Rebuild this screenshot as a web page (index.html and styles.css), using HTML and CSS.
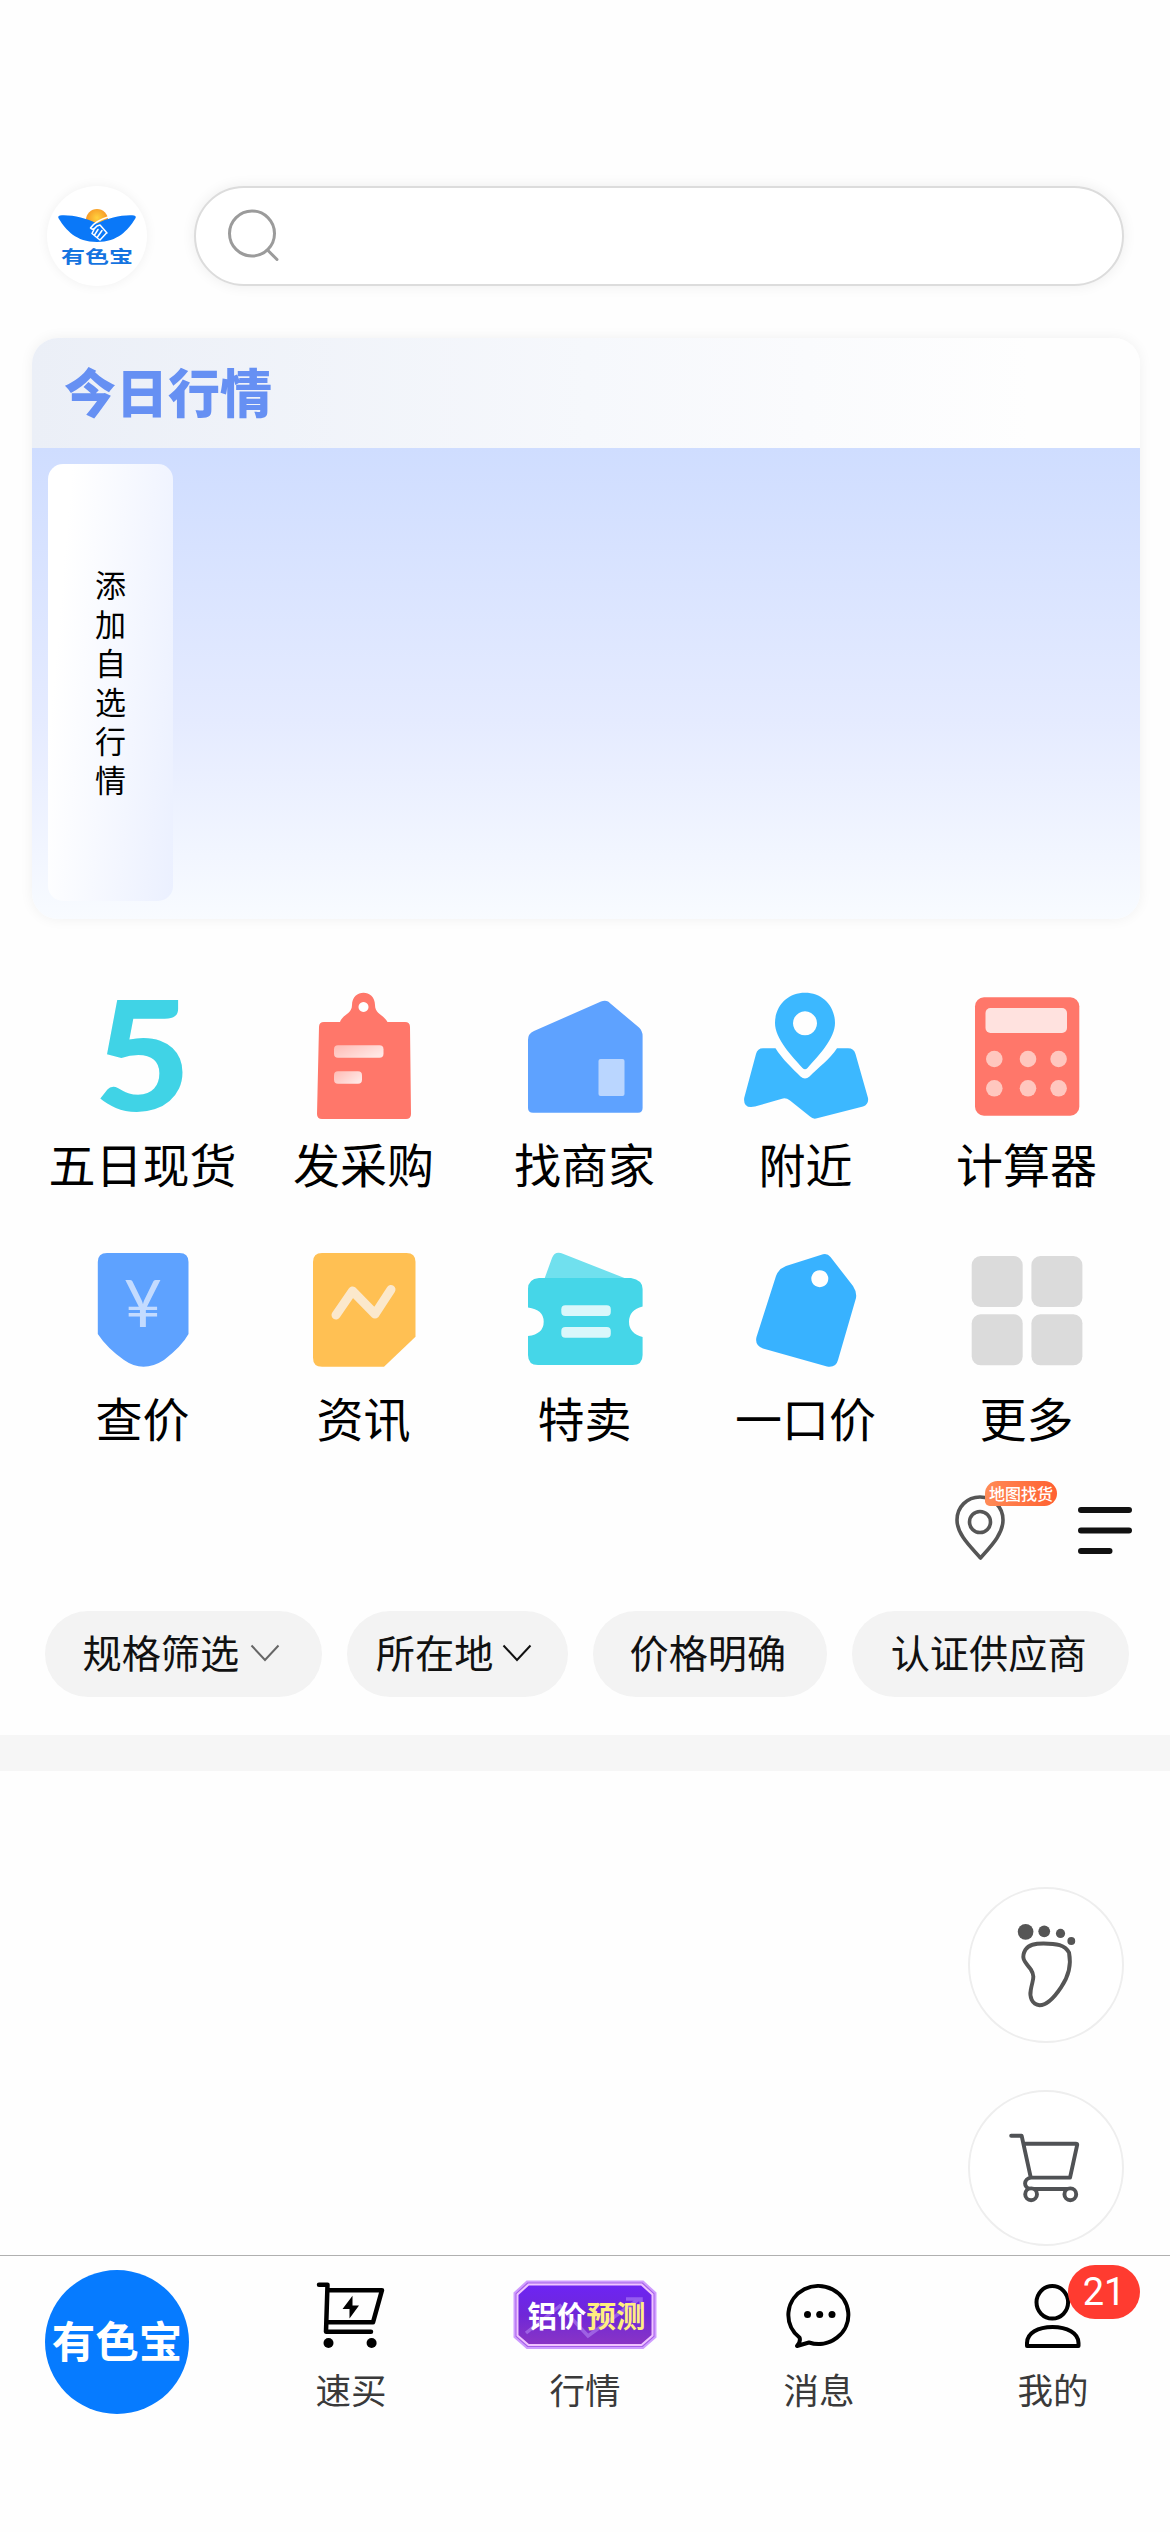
FILE: index.html
```html
<!DOCTYPE html>
<html lang="zh-CN">
<head>
<meta charset="utf-8">
<title>有色宝</title>
<link rel="stylesheet" href="styles.css">
</head>
<body>
<div class="app">
  <header class="header">
    <svg class="logo" viewBox="0 0 100 100">
      <defs>
        <radialGradient id="sun" cx=".5" cy=".4" r=".6"><stop offset="0" stop-color="#ffd23e"/><stop offset="1" stop-color="#f58a1f"/></radialGradient>
      </defs>
      <circle cx="50" cy="34" r="11" fill="url(#sun)"/>
      <path d="M13 29.500C24 28.500 39 32 50 37.500C61 32 76 28.500 87 29.500Q90 30 88 33C81 44 71 56 50 56C29 56 19 44 12 33Q10 30 13 29.500Z" fill="#0a78f8"/>
      <path d="M61 31Q48 35 43.500 42Q46 45 50 40L53 39L60 47M47 43.500L45 47.500M51 43.500L47.500 49M55 44.500L50.500 51M59.500 47L53 54M45 47.500L48 50L51 52.500L53 54" fill="none" stroke="#fff" stroke-width="1.500" stroke-linecap="round" stroke-linejoin="round"/>
      <text class="logo-name" x="14" y="76.500" textLength="72" lengthAdjust="spacingAndGlyphs">有色宝</text>
    </svg>
    <div class="search">
      <svg viewBox="0 0 60 60" width="60" height="60" fill="none" stroke="#9b9b9b" stroke-width="3" stroke-linecap="round"><circle cx="28" cy="27.500" r="22.500"/><path d="M44 44.500L53 53.500"/></svg>
    </div>
  </header>

  <section class="market">
    <h2 class="market-title">今日行情</h2>
    <div class="market-body"><div class="market-add">添加自选行情</div></div>
  </section>

  <nav class="grid">
    <a class="entry"><svg viewBox="0 0 130 130"><text class="five" x="16" y="121" textLength="97" lengthAdjust="spacingAndGlyphs">5</text></svg><span>五日现货</span></a>
    <a class="entry"><svg viewBox="0 0 130 130">
      <defs><linearGradient id="soft" x1="0" x2="1" y1="0" y2="0.600"><stop offset="0" stop-color="#fff" stop-opacity=".5"/><stop offset="1" stop-color="#fff" stop-opacity=".82"/></linearGradient></defs>
      <path fill="#ff776a" fill-rule="evenodd" d="M25 32H41C43 25 53 24 53 15C53 -1.500 76 -1.500 76 15C76 24 85 25 88.500 32H106Q111 32 111 37L112 124Q112 129 107 129H23Q18 129 18 124L20 37Q20 32 25 32ZM64.500 12a5 5 0 1 0 .01 0Z"/>
      <rect x="35" y="55.300" width="49.500" height="12.500" rx="4" fill="url(#soft)"/><rect x="35" y="81.300" width="28" height="12.500" rx="4" fill="url(#soft)"/></svg><span>发采购</span></a>
    <a class="entry"><svg viewBox="0 0 130 130"><path fill="#5ea2ff" d="M14 41L81 11.500Q87 9 91 14L119 37.500Q122.600 41 122.600 46V118Q122.600 122.700 118 122.700H13Q8 122.700 8 118V50Q8 43.500 14 41Z"/><rect x="78.500" y="69" width="26" height="37" rx="2" fill="#bad6ff"/></svg><span>找商家</span></a>
    <a class="entry"><svg viewBox="0 0 130 130" fill="#3cb8ff"><path fill-rule="evenodd" d="M64 2.700C81 2.700 94 15.500 94 33C94 49 77 66 66.500 78Q64 80.500 61.500 78C51 66 34 49 34 33C34 15.500 47 2.700 64 2.700ZM64 21.300a12 12 0 1 0 .01 0Z"/><path d="M22 58.300H34.500C41 69 52 79 59.500 86.500Q64 90.500 68.500 86.500C77 78 89 69 96 58.300H107Q113 58.300 114.500 64L127 108Q128 114 122 116.500L76 128.300Q72 129.500 69 126.500L49 110.500Q45 107.500 41 108.700L14 116.500Q2 119 3.200 108L15 64Q16.500 58.300 22 58.300Z"/></svg><span>附近</span></a>
    <a class="entry"><svg viewBox="0 0 130 130"><rect x="13" y="7.300" width="104.300" height="118.400" rx="9" fill="#ff776a"/><rect x="23.500" y="18" width="81.500" height="25" rx="5" fill="#fff" fill-opacity=".79"/><g fill="#ffc7bf"><circle cx="32.300" cy="69" r="8.300"/><circle cx="66" cy="69" r="8.300"/><circle cx="96.600" cy="69" r="8.300"/><circle cx="32.300" cy="98.300" r="8.300"/><circle cx="66" cy="98.300" r="8.300"/><circle cx="96.600" cy="98.300" r="8.300"/></g></svg><span>计算器</span></a>
    <a class="entry"><svg viewBox="0 0 130 130"><path fill="#5ea2ff" d="M29 9H101.500Q110.500 9 110.500 18V90Q104 102 86 116Q65 129.500 46 116Q29 104 19.800 90V18Q19.800 9 29 9Z"/><text class="yen" x="64.800" y="82.700" text-anchor="middle">¥</text></svg><span>查价</span></a>
    <a class="entry"><svg viewBox="0 0 130 130"><path fill="#ffc053" d="M23 9H107.500Q116.500 9 116.500 18V92.700L85 122.700H23Q14 122.700 14 113.700V18Q14 9 23 9Z"/><path d="M37 71L53.500 47L76 70L92 45.500" fill="none" stroke="#fbe8cc" stroke-width="9" stroke-linecap="round" stroke-linejoin="round"/></svg><span>资讯</span></a>
    <a class="entry"><svg viewBox="0 0 130 130"><path fill="#70e0ee" d="M24.400 35L32 14Q35 6 43.500 10L107 35Z"/><path fill="#45d6e8" d="M19 34H111Q122.600 36 122.600 45V62.500Q109 66 109 77.700Q109 89.500 122.600 93V111Q122.600 121 112.600 121H18Q8 121 8 111V92Q23.700 90 23.700 77.700Q23.700 65.500 8 63.500V45Q8 35 19 34Z"/><g fill="#fff" fill-opacity=".8"><rect x="41.300" y="61.300" width="49.500" height="10.700" rx="4"/><rect x="41.300" y="83" width="49.500" height="10.700" rx="4"/></g></svg><span>特卖</span></a>
    <a class="entry"><svg viewBox="0 0 130 130"><path fill="#38b2ff" fill-rule="evenodd" d="M45 22L82 10.200Q86.500 9 89.500 13L112 42Q116 48 115 54L97 116Q95 124 86 122.500L22 104.500Q13.500 101.500 15.500 93L35 32Q37.500 25 45 22ZM78.800 26.200a8.500 8.500 0 1 0 .01 0Z"/></svg><span>一口价</span></a>
    <a class="entry"><svg viewBox="0 0 130 130" fill="#dbdbdb"><rect x="9.700" y="12" width="51" height="51" rx="9"/><rect x="69.400" y="12" width="51" height="51" rx="9"/><rect x="9.700" y="70.300" width="51" height="51" rx="9"/><rect x="69.400" y="70.300" width="51" height="51" rx="9"/></svg><span>更多</span></a>
  </nav>

  <div class="tools">
    <div class="map-find">
      <svg viewBox="0 0 50 66" width="50" height="66" fill="none" stroke="#555" stroke-width="3.600" stroke-linejoin="round"><path d="M25 2C38 2 48 12 48 25C48 40 34 53 25.500 63C17 53 2 40 2 25C2 12 12 2 25 2Z"/><circle cx="25" cy="27" r="10.500"/></svg>
      <span class="map-tag">地图找货</span>
    </div>
    <svg class="menu" viewBox="0 0 54 48" stroke="#111" stroke-width="6" stroke-linecap="round"><path d="M3 3H51M3 23.500H51M3 44H31.500"/></svg>
  </div>

  <div class="filters">
    <button class="pill wide">规格筛选<svg class="chev grey" viewBox="0 0 30 18"><path d="M1.500 1.500L15 16L28.500 1.500"/></svg></button>
    <button class="pill small">所在地<svg class="chev" viewBox="0 0 30 18"><path d="M1.500 1.500L15 16L28.500 1.500"/></svg></button>
    <button class="pill mid">价格明确</button>
    <button class="pill wide">认证供应商</button>
  </div>

  <main class="feed"></main>

  <aside class="floats">
    <svg class="fab" viewBox="0 0 155 155"><g fill="#555"><circle cx="56.700" cy="43.700" r="8"/><circle cx="75.700" cy="43.200" r="6"/><circle cx="92.300" cy="45.300" r="4.700"/><circle cx="103.300" cy="53" r="4"/></g><path d="M75 55.500C88 55.500 97 57 101 65C103.500 78 100 90 93 100C83 115 76 118.500 71 118.500C63 117.500 60.500 110 62 103C63.500 93 67 90 62 82C56 74 51.500 71 56.500 62C60 56.500 66 55.500 75 55.500Z" fill="none" stroke="#555" stroke-width="4"/></svg>
    <svg class="fab" viewBox="0 0 155 155" fill="none" stroke="#505255" stroke-width="4" stroke-linecap="round" stroke-linejoin="round"><path d="M42 44.700H52.700L62 87.300H102L109.300 54Q109.500 52.700 108 52.700H55M62 87.300C54.500 88.500 54 98 62 99H102"/><circle cx="62.300" cy="104.300" r="6" fill="#fff"/><circle cx="102.300" cy="104.300" r="6" fill="#fff"/></svg>
  </aside>

  <nav class="tabs">
    <a class="tab home"><span class="home-logo">有色宝</span></a>
    <a class="tab"><svg viewBox="0 0 70 70" width="70" height="70" fill="none" stroke="#000" stroke-width="4.500" stroke-linecap="round" stroke-linejoin="round"><path d="M3 4.700H11.500L10 51.700H55M11.500 10.200H66L57 42.300H10.500"/><g fill="#000" stroke="none"><circle cx="12.500" cy="63" r="5"/><circle cx="55.600" cy="63" r="5"/><path d="M36.500 15.700L26.500 29H33.500V38.500L43 25.500H36.500Z"/></g></svg><span>速买</span></a>
    <a class="tab"><span class="forecast">
      <svg viewBox="0 0 144 70"><defs><linearGradient id="vio" x2="0" y2="1"><stop offset="0" stop-color="#6d24f4"/><stop offset=".5" stop-color="#6f27d8"/><stop offset="1" stop-color="#8a35c4"/></linearGradient></defs><path d="M14 1.500H130L142.500 13V57L130 68H14L1.500 57V13Z" fill="#a560e8" stroke="#cf9cff" stroke-width="2"/><path d="M15.500 4.500H128.500L139.500 14.500V55.500L128.500 65H15.500L4.500 55.500V14.500Z" fill="url(#vio)" stroke="#f0c4ff" stroke-width="2"/><path d="M13 53L47 26L75 56L126 19M113 19H128V29" fill="none" stroke="#b78af5" stroke-opacity=".55" stroke-width="3.500"/></svg>
      <span class="forecast-text">铝价<b>预测</b></span></span><span>行情</span></a>
    <a class="tab"><svg viewBox="0 0 70 70" width="70" height="70" fill="none" stroke="#000" stroke-width="4" stroke-linejoin="round"><path d="M15.500 57.500A30 29 0 1 1 25 62.500L13 66Q17 62 15.500 57.500Z"/><g fill="#000" stroke="none"><circle cx="23.500" cy="34.500" r="3.500"/><circle cx="35.700" cy="34.500" r="3.500"/><circle cx="48" cy="34.500" r="3.500"/></g></svg><span>消息</span></a>
    <a class="tab"><svg viewBox="0 0 70 70" width="70" height="70" fill="none" stroke="#000" stroke-width="4" stroke-linejoin="round"><ellipse cx="34.300" cy="22.300" rx="15.800" ry="16.300"/><path d="M9 66V63C9 53 20 47 34.500 47C49 47 60.500 53 60.500 63V66Z"/></svg><span>我的</span><span class="badge">21</span></a>
  </nav>
</div>
</body>
</html>
```
FILE: styles.css
```css
* { box-sizing: border-box; }

body {
  margin: 0;
  background: #fefefe;
  color: #000;
  font-family: "Noto Sans CJK SC", sans-serif;
}

.app {
  position: relative;
  display: flex;
  flex-direction: column;
  width: 1170px;
  height: 2532px;
  overflow: hidden;
}

.header {
  display: flex;
  gap: 47px;
  padding: 186px 46px 0 47px;
}

.logo {
  width: 100px;
  height: 100px;
  border-radius: 50%;
  background: #fff;
  box-shadow: 0 0 12px rgba(0, 0, 0, .06);
}

.logo-name {
  font-size: 17px;
  font-weight: 700;
  fill: #1574e0;
}

.search {
  display: flex;
  align-items: center;
  flex: 1;
  height: 100px;
  padding-left: 28px;
  border: 2px solid #dcdcdc;
  border-radius: 50px;
  background: #fff;
  box-shadow: 0 0 14px rgba(0, 0, 0, .07);
}

.market {
  margin: 52px 30px 0 32px;
  height: 581px;
  border-radius: 26px;
  overflow: hidden;
  box-shadow: 0 0 14px rgba(0, 0, 0, .06);
}

.market-title {
  height: 110px;
  margin: 0;
  padding-left: 32px;
  background: linear-gradient(90deg, #ebeff7, #f6f8fc 50%, #fefefe 90%);
  color: #6690f3;
  font-size: 52px;
  font-weight: 900;
  line-height: 106px;
}

.market-body {
  height: 471px;
  padding: 16px;
  background: linear-gradient(#cfddff, #e5ebff 58%, #f8fbff);
}

.market-add {
  display: flex;
  align-items: center;
  justify-content: center;
  width: 125px;
  height: 437px;
  padding-top: 8px;
  border-radius: 15px;
  background: linear-gradient(95deg, #fff 15%, #ebf0ff);
  font-size: 31px;
  letter-spacing: 7.900px;
  writing-mode: vertical-rl;
}

.grid {
  display: grid;
  grid-template-columns: repeat(5, 221px);
  grid-auto-rows: 254px;
  margin-left: 32px;
  padding-top: 71px;
}

.entry {
  display: flex;
  flex-direction: column;
  align-items: center;
  font-size: 47px;
  line-height: 86px;
}

.entry svg { width: 130px; height: 130px; }

.five {
  fill: #40d3e6;
  font: 900 153px Lato, sans-serif;
}

.yen {
  fill: #c3dbff;
  font: 66px Lato, sans-serif;
}

.tools {
  display: flex;
  justify-content: flex-end;
  align-items: flex-start;
  gap: 73px;
  height: 113px;
  padding-right: 38px;
}

.map-find { position: relative; }

.map-find > svg { display: block; margin-top: -3px; }

.map-tag {
  position: absolute;
  left: 30px;
  top: -17px;
  width: 72px;
  height: 25px;
  border-radius: 13px 13px 13px 5px;
  background: linear-gradient(90deg, #ff8b57, #ff6030);
  color: #fff;
  font-size: 16px;
  font-weight: 500;
  line-height: 24px;
  text-align: center;
  white-space: nowrap;
}

.menu { width: 54px; height: 48px; margin-top: 9px; }

.filters {
  display: flex;
  gap: 25px;
  height: 86px;
  padding: 0 41px 0 45px;
}

.pill {
  display: flex;
  align-items: center;
  justify-content: center;
  gap: 11px;
  padding: 0 4px 6px 0;
  border: 0;
  border-radius: 43px;
  background: #f3f3f3;
  color: #111;
  font: 39.200px "Noto Sans CJK SC", sans-serif;
  white-space: nowrap;
}

.pill.wide { width: 277px; }
.pill.small { width: 221px; gap: 9px; padding-right: 6px; }
.pill.mid { width: 235px; }

.chev {
  width: 30px;
  height: 18px;
  margin-top: 4px;
  fill: none;
  stroke: #111;
  stroke-width: 2;
}

.chev.grey { stroke: #666; }

.feed {
  flex: 1;
  margin-top: 38px;
  border-top: 36px solid #f6f6f6;
}

.floats {
  position: absolute;
  top: 1887px;
  right: 46px;
  display: flex;
  flex-direction: column;
  gap: 47px;
}

.fab {
  width: 156px;
  height: 156px;
  border: 2px solid #eee;
  border-radius: 50%;
  background: #fff;
}

.tabs {
  display: grid;
  grid-template-columns: repeat(5, 1fr);
  height: 277px;
  border-top: 1px solid #b0b0b0;
  background: #fefefe;
}

.tab {
  position: relative;
  display: flex;
  flex-direction: column;
  align-items: center;
  padding-top: 24px;
  color: #3a3a3a;
  font-size: 35.500px;
  line-height: 77px;
}

.tab.home { padding-top: 14px; }

.home-logo {
  width: 144px;
  height: 144px;
  border-radius: 50%;
  background: #067bff;
  color: #fff;
  font-size: 43.500px;
  font-weight: 700;
  line-height: 140px;
  text-align: center;
}

.forecast {
  display: grid;
  width: 144px;
  height: 70px;
}

.forecast > * { grid-area: 1 / 1; }

.forecast-text {
  padding-left: 3px;
  color: #fff;
  font-size: 29.500px;
  font-weight: 700;
  line-height: 69px;
  text-align: center;
}

.forecast b { color: #ffee80; font-weight: 700; }

.badge {
  position: absolute;
  left: 132px;
  top: 9px;
  width: 72px;
  height: 54px;
  border-radius: 27px;
  background: #ff3b30;
  color: #fff;
  font: 38px/54px Roboto, sans-serif;
  text-align: center;
}
```
